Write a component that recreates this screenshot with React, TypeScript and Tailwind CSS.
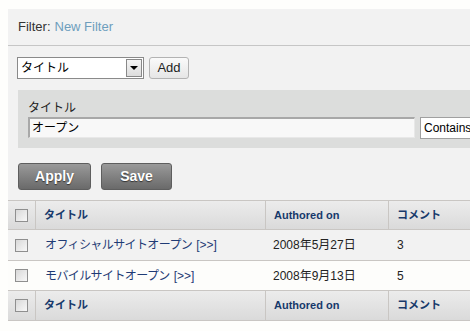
const rows = [
	{ title: "オフィシャルサイトオープン", date: "2008年5月27日", comments: "3", cls: "h-[31px] bg-[#f2f2f2]" },
	{ title: "モバイルサイトオープン", date: "2008年9月13日", comments: "5", cls: "h-[30px] bg-[#fdfdfb]" },
];

function Checkbox() {
	return (
		<span className="block w-[13px] h-[13px] border border-[#8f8f8f] bg-gradient-to-br from-[#d8d8d8] to-[#f8f8f8]" />
	);
}

function HeaderRow({ h }: { h: string }) {
	return (
		<div
			className={`grid grid-cols-[28px_230px_123px_1fr] ${h} bg-gradient-to-b from-[#ececec] to-[#dadada] border-b border-[#c9c6c3] text-[11px] font-bold text-[#17396b]`}
		>
			<div className="flex items-center pl-[7px] border-r border-[#c9c6c3]">
				<Checkbox />
			</div>
			<div className="flex items-center pl-[8px] border-r border-[#c9c6c3]">タイトル</div>
			<div className="flex items-center pl-[8px] border-r border-[#c9c6c3]">Authored on</div>
			<div className="flex items-center pl-[8px]">コメント</div>
		</div>
	);
}

export default function App() {
	return (
		<div
			className="w-[470px] h-[331px] overflow-hidden bg-[#fefefc] pl-[8px] pt-[9px]"
			style={{ fontFamily: '"Liberation Sans", Arial, "Noto Sans CJK JP", sans-serif' }}
		>
			<div className="w-[600px] bg-[#f2f2f2]">
				<div className="h-[37px] border-b border-[#c6c6c6] flex items-center pl-[10px] text-[13px]">
					<span className="text-[#333]">Filter:</span>
					<span className="ml-[4px] text-[#6e9ebd]">New Filter</span>
				</div>

				<div className="flex items-center mt-[11px] pl-[9px]">
					<div className="w-[127px] h-[22px] flex items-center border border-[#8a8a8a] bg-white">
						<span className="flex-1 pl-[3px] text-[12px] text-black">タイトル</span>
						<span className="w-[16px] h-[18px] mr-[1px] flex items-center justify-center border border-[#888] bg-gradient-to-b from-[#f4f4f4] to-[#dcdcdc]">
							<span className="w-0 h-0 border-l-[4px] border-r-[4px] border-t-[4px] border-l-transparent border-r-transparent border-t-black" />
						</span>
					</div>
					<button className="ml-[5px] w-[40px] h-[22px] rounded-[3px] border border-[#b3b3b3] bg-gradient-to-b from-[#fafafa] to-[#e6e6e6] text-[13px] text-[#222]">
						Add
					</button>
				</div>

				<div className="mt-[11px] ml-[10px] h-[58px] bg-[#dcdddc] pl-[10px] pt-[11px]">
					<div className="text-[12px] leading-[15px] text-[#222]">タイトル</div>
					<div className="flex mt-[1px]">
						<div className="w-[387px] h-[21px] bg-[#f8f8f8] border-t-2 border-l-2 border-[#a8a8a8] border-b border-r border-b-[#e8e8e8] border-r-[#e8e8e8] pl-[2px] flex items-center text-[12px] text-black">
							オープン
						</div>
						<div className="ml-[5px] w-[80px] h-[22px] bg-white border border-[#a0a0a0] flex items-center pl-[3px] text-[12px] text-black">
							Contains
						</div>
					</div>
				</div>

				<div className="flex mt-[15px] ml-[10px] gap-[10px]">
					<button className="w-[73px] h-[27px] rounded-[3px] border border-[#5e5e5e] bg-gradient-to-b from-[#9a9a9a] to-[#6a6a6a] text-white text-[14px] font-bold [text-shadow:0_1px_1px_#333]">
						Apply
					</button>
					<button className="w-[71px] h-[27px] rounded-[3px] border border-[#5e5e5e] bg-gradient-to-b from-[#9a9a9a] to-[#6a6a6a] text-white text-[14px] font-bold [text-shadow:0_1px_1px_#333]">
						Save
					</button>
				</div>

				<div className="mt-[10px] border-t border-[#c9c6c3]">
					<HeaderRow h="h-[29px]" />
					{rows.map((r) => (
						<div
							key={r.title}
							className={`grid grid-cols-[28px_230px_123px_1fr] border-b border-[#c9c6c3] text-[12px] ${r.cls}`}
						>
							<div className="flex items-center pl-[7px]">
								<Checkbox />
							</div>
							<div className="flex items-center pl-[9px] text-[#1f3b75]">
								<span className="tracking-[-0.6px]">{r.title}</span>
								<span className="ml-[4px]">[&gt;&gt;]</span>
							</div>
							<div className="flex items-center pl-[7px] text-[#222]">{r.date}</div>
							<div className="flex items-center pl-[8px] text-[#222]">{r.comments}</div>
						</div>
					))}
					<HeaderRow h="h-[30px]" />
				</div>
			</div>
		</div>
	);
}
